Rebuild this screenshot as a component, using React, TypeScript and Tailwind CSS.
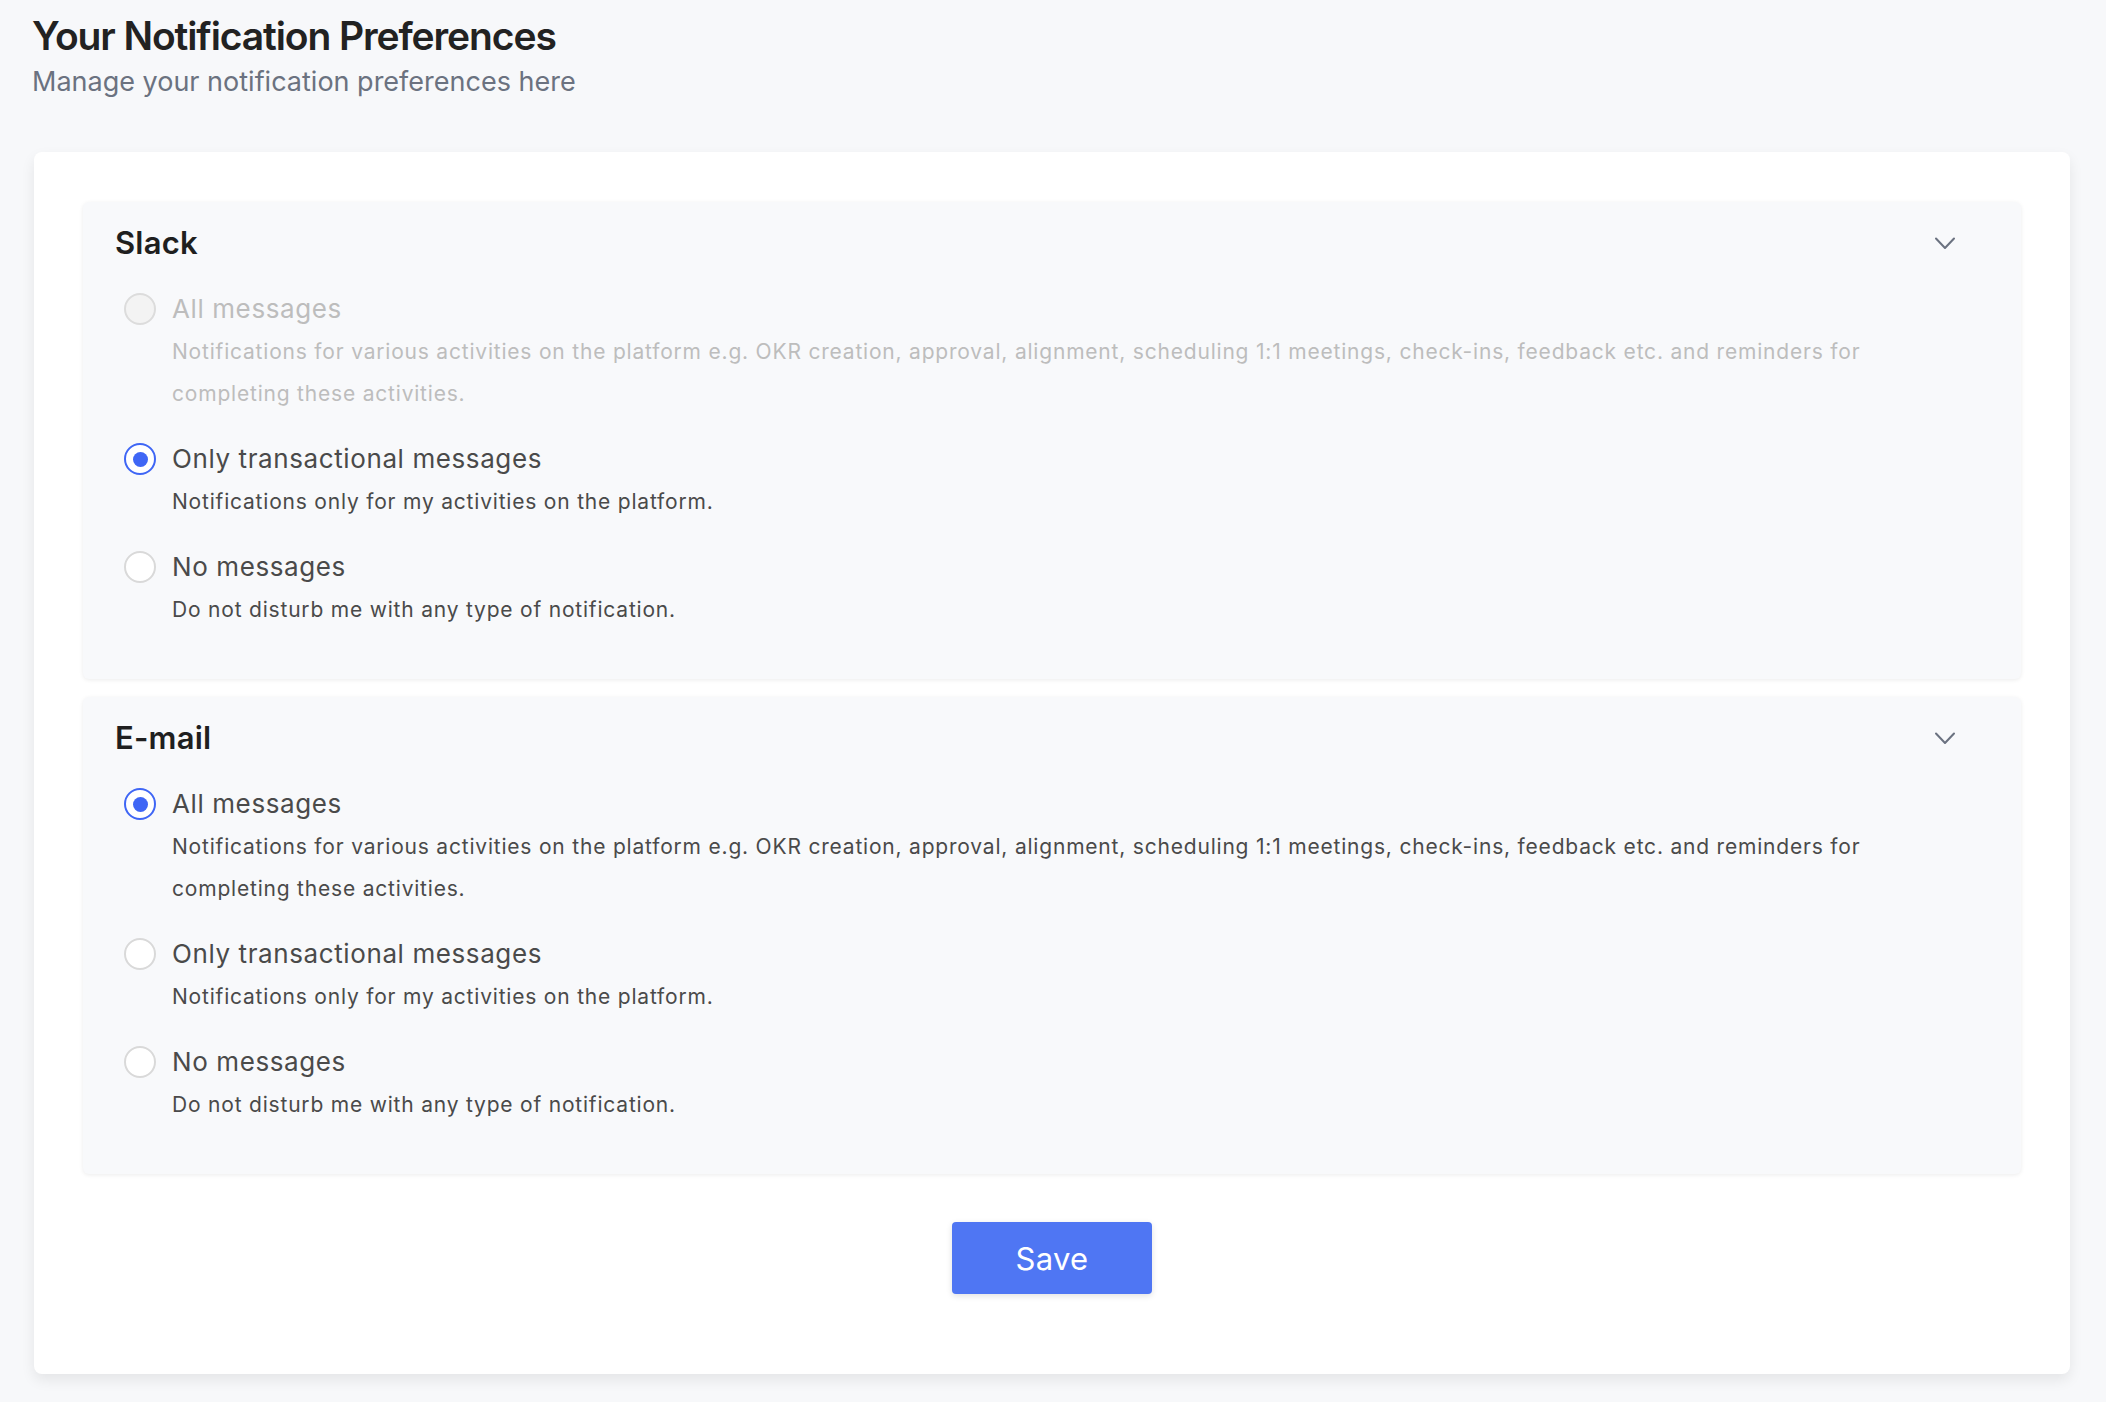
import React, { useState } from 'react';

type Option = {
  value: string;
  label: string;
  description: string;
};

const OPTIONS: Option[] = [
  {
    value: 'all',
    label: 'All messages',
    description:
      'Notifications for various activities on the platform e.g. OKR creation, approval, alignment, scheduling 1:1 meetings, check-ins, feedback etc. and reminders for completing these activities.',
  },
  {
    value: 'transactional',
    label: 'Only transactional messages',
    description: 'Notifications only for my activities on the platform.',
  },
  {
    value: 'none',
    label: 'No messages',
    description: 'Do not disturb me with any type of notification.',
  },
];

const ChevronDown = () => (
  <svg width="20" height="13" viewBox="0 0 20 13" fill="none" className="text-[#6b7280]">
    <polyline points="1,1.5 10,11 19,1.5" stroke="currentColor" strokeWidth="2" strokeLinecap="round" strokeLinejoin="round" />
  </svg>
);

interface RadioProps {
  checked: boolean;
  disabled?: boolean;
}

const Radio = ({ checked, disabled }: RadioProps) => {
  if (checked) {
    return (
      <span className="mt-[6px] flex h-[32px] w-[32px] shrink-0 items-center justify-center rounded-full border-[2.5px] border-[#3f66f5] bg-white">
        <span className="h-[15px] w-[15px] rounded-full bg-[#3f66f5]" />
      </span>
    );
  }
  return (
    <span
      className={
        disabled
          ? 'mt-[6px] h-[32px] w-[32px] shrink-0 rounded-full border-2 border-[#dcdcdc] bg-[#f3f3f3]'
          : 'mt-[6px] h-[32px] w-[32px] shrink-0 rounded-full border-2 border-[#d9d9d9] bg-white'
      }
    />
  );
};

interface ChannelPanelProps {
  title: string;
  selected: string;
  disabledValues?: string[];
  onChange: (value: string) => void;
}

const ChannelPanel = ({ title, selected, disabledValues = [], onChange }: ChannelPanelProps) => (
  <div className="rounded-md bg-[#f8f9fb] px-[32px] pt-[21px] pb-[48px] shadow-[0_1px_4px_rgba(0,0,0,0.08)]">
    <div className="flex h-[40px] items-center justify-between">
      <h2 className="text-[31px] leading-[40px] font-semibold tracking-[0.2px] text-[#1f1f1f]">{title}</h2>
      <button type="button" className="mr-[34px] flex items-center">
        <ChevronDown />
      </button>
    </div>

    <div className="mt-[24px] flex flex-col gap-[22px] pl-[9px]">
      {OPTIONS.map((option) => {
        const isDisabled = disabledValues.includes(option.value);
        return (
          <label
            key={option.value}
            className={isDisabled ? 'flex cursor-not-allowed items-start gap-[16px]' : 'flex cursor-pointer items-start gap-[16px]'}
            onClick={() => !isDisabled && onChange(option.value)}
          >
            <Radio checked={selected === option.value} disabled={isDisabled} />
            <div className="flex flex-col">
              <span
                className={
                  isDisabled
                    ? 'text-[26px] leading-[44px] tracking-[0.6px] text-[#bdbdbd]'
                    : 'text-[26px] leading-[44px] tracking-[0.6px] text-[#4a4a4a]'
                }
              >
                {option.label}
              </span>
              <span
                className={
                  isDisabled
                    ? 'max-w-[1730px] text-[21px] leading-[42px] tracking-[0.8px] text-[#bdbdbd]'
                    : 'max-w-[1730px] text-[21px] leading-[42px] tracking-[0.8px] text-[#4a4a4a]'
                }
              >
                {option.description}
              </span>
            </div>
          </label>
        );
      })}
    </div>
  </div>
);

const App = () => {
  const [slack, setSlack] = useState('transactional');
  const [email, setEmail] = useState('all');

  return (
    <div className="min-h-screen bg-[#f7f8fa] pt-[12px] pr-[36px] pl-[34px] pb-[26px] font-['Inter','Noto_Sans',sans-serif]">
      <h1 className="-ml-[2px] text-[39px] leading-[48px] font-semibold tracking-[-1.1px] text-[#222222]">
        Your Notification Preferences
      </h1>
      <p className="-ml-[2px] mt-[4px] text-[27px] leading-[36px] text-[#6b7280]">Manage your notification preferences here</p>

      <div className="mt-[52px] rounded-lg bg-white px-[49px] pt-[50px] pb-[80px] shadow-[0_6px_14px_rgba(0,0,0,0.08)]">
        <div className="flex flex-col gap-[18px]">
          <ChannelPanel title="Slack" selected={slack} disabledValues={['all']} onChange={setSlack} />
          <ChannelPanel title="E-mail" selected={email} onChange={setEmail} />
        </div>

        <div className="mt-[48px] flex justify-center">
          <button
            type="button"
            className="h-[72px] w-[200px] rounded-[4px] bg-[#4f76f3] pt-[2px] text-[31px] tracking-[0.3px] text-white shadow-[0_2px_6px_rgba(0,0,0,0.12)]"
          >
            Save
          </button>
        </div>
      </div>
    </div>
  );
};

export default App;
